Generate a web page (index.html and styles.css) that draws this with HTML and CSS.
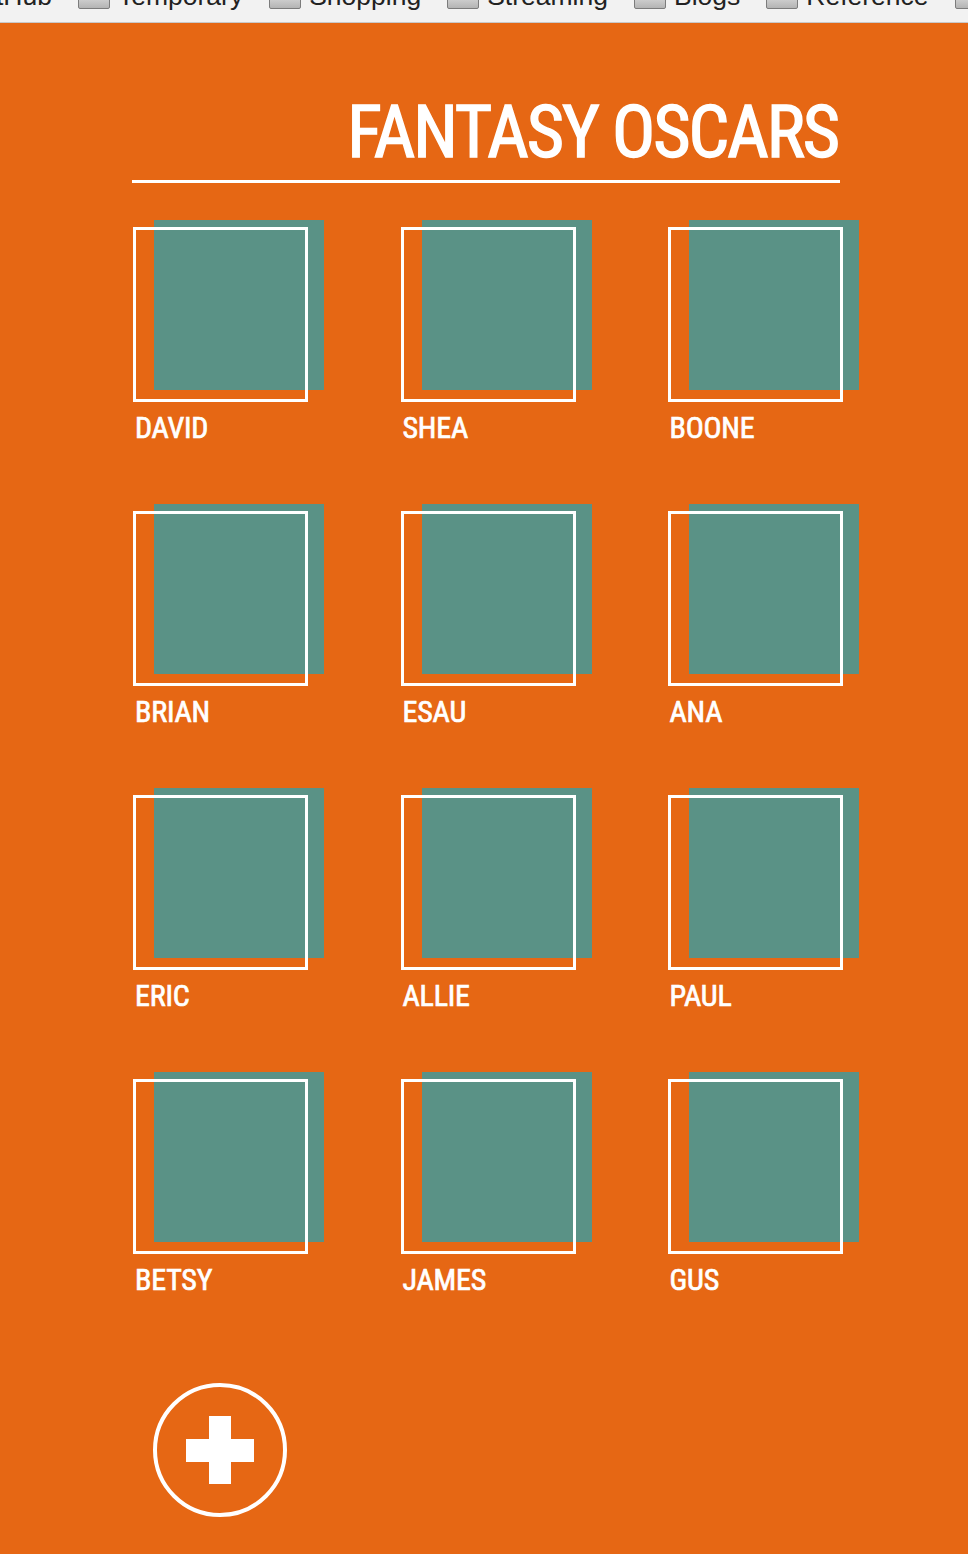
FILE: index.html
```html
<!DOCTYPE html>
<html>
<head>
<meta charset="utf-8">
<title>Fantasy Oscars</title>
<link rel="stylesheet" href="styles.css">
</head>
<body>
<div class="bookmarks">
  <span class="bm-text bm-first">tHub</span>
  <span class="bm"><span class="folder"></span><span class="bm-text">Temporary</span></span>
  <span class="bm"><span class="folder"></span><span class="bm-text">Shopping</span></span>
  <span class="bm"><span class="folder"></span><span class="bm-text">Streaming</span></span>
  <span class="bm"><span class="folder"></span><span class="bm-text">Blogs</span></span>
  <span class="bm"><span class="folder"></span><span class="bm-text">Reference</span></span>
  <span class="bm"><span class="folder"></span></span>
</div>
<main class="app">
  <div class="wrap">
    <h1 class="title">FANTASY OSCARS</h1>
    <div class="grid">
      <div class="player"><div class="card"></div><div class="name">DAVID</div></div>
      <div class="player"><div class="card"></div><div class="name">SHEA</div></div>
      <div class="player"><div class="card"></div><div class="name">BOONE</div></div>
      <div class="player"><div class="card"></div><div class="name">BRIAN</div></div>
      <div class="player"><div class="card"></div><div class="name">ESAU</div></div>
      <div class="player"><div class="card"></div><div class="name">ANA</div></div>
      <div class="player"><div class="card"></div><div class="name">ERIC</div></div>
      <div class="player"><div class="card"></div><div class="name">ALLIE</div></div>
      <div class="player"><div class="card"></div><div class="name">PAUL</div></div>
      <div class="player"><div class="card"></div><div class="name">BETSY</div></div>
      <div class="player"><div class="card"></div><div class="name">JAMES</div></div>
      <div class="player"><div class="card"></div><div class="name">GUS</div></div>
    </div>
    <button class="add" type="button" aria-label="Add player">
      <svg width="134" height="134" viewBox="0 0 134 134">
        <circle cx="67" cy="67" r="65" fill="none" stroke="#fff" stroke-width="4"/>
        <rect x="33" y="56" width="68" height="23" fill="#fff"/>
        <rect x="56" y="33" width="22" height="68" fill="#fff"/>
      </svg>
    </button>
  </div>
</main>
</body>
</html>
```
FILE: styles.css
```css
html, body {
  margin: 0;
  padding: 0;
}
body {
  background: #e66714;
  font-family: "Roboto Condensed", "DejaVu Sans Condensed", "Liberation Sans Narrow", "Roboto", sans-serif;
}
.bookmarks {
  height: 22px;
  background: #f2f2f2;
  border-bottom: 1px solid #c9c9c9;
  overflow: hidden;
  display: flex;
  align-items: flex-start;
  font-family: "Liberation Sans", sans-serif;
  font-size: 26.5px;
  color: #222;
  white-space: nowrap;
}
.bm-text {
  display: block;
  margin-top: -19px;
}
.bm-first {
  margin-left: -4px;
}
.bm {
  display: flex;
  align-items: flex-start;
  margin-left: 26px;
}
.folder {
  display: block;
  width: 30px;
  height: 12px;
  margin-top: -5px;
  margin-right: 8px;
  background: linear-gradient(#d8d8d8, #b4b4b4);
  border: 1px solid #7c7c7c;
  border-radius: 2px;
}
.app {
  background: #e66714;
  min-height: 1531px;
}
.wrap {
  width: 708px;
  margin-left: 132px;
  padding-top: 1px;
}
.title {
  margin: 64px 0 0;
  font-size: 72px;
  font-weight: 400;
  -webkit-text-stroke: 1.4px #fff;
  letter-spacing: -2.1px;
  line-height: 90px;
  color: #fff;
  text-align: right;
  border-bottom: 3px solid #fff;
  padding-bottom: 2px;
  padding-right: 2px;
}
.grid {
  display: grid;
  grid-template-columns: 267.5px 267px 173px;
  margin-top: 44px;
  margin-left: 1px;
}
.player {
  height: 284px;
}
.card {
  position: relative;
  width: 175px;
  height: 175px;
}
.card::before {
  content: "";
  position: absolute;
  left: 21px;
  top: -7px;
  width: 170px;
  height: 170px;
  background: #5a9286;
}
.card::after {
  content: "";
  position: absolute;
  inset: 0;
  border: 3px solid #fff;
}
.name {
  margin-top: 8px;
  margin-left: 2px;
  font-size: 30px;
  font-weight: 400;
  -webkit-text-stroke: 0.7px #fff;
  letter-spacing: -0.2px;
  line-height: 36px;
  color: #fff;
}
.add {
  display: block;
  margin: 20px 0 0 21px;
  padding: 0;
  border: 0;
  background: none;
  width: 134px;
  height: 134px;
}
.add svg {
  display: block;
}
```
